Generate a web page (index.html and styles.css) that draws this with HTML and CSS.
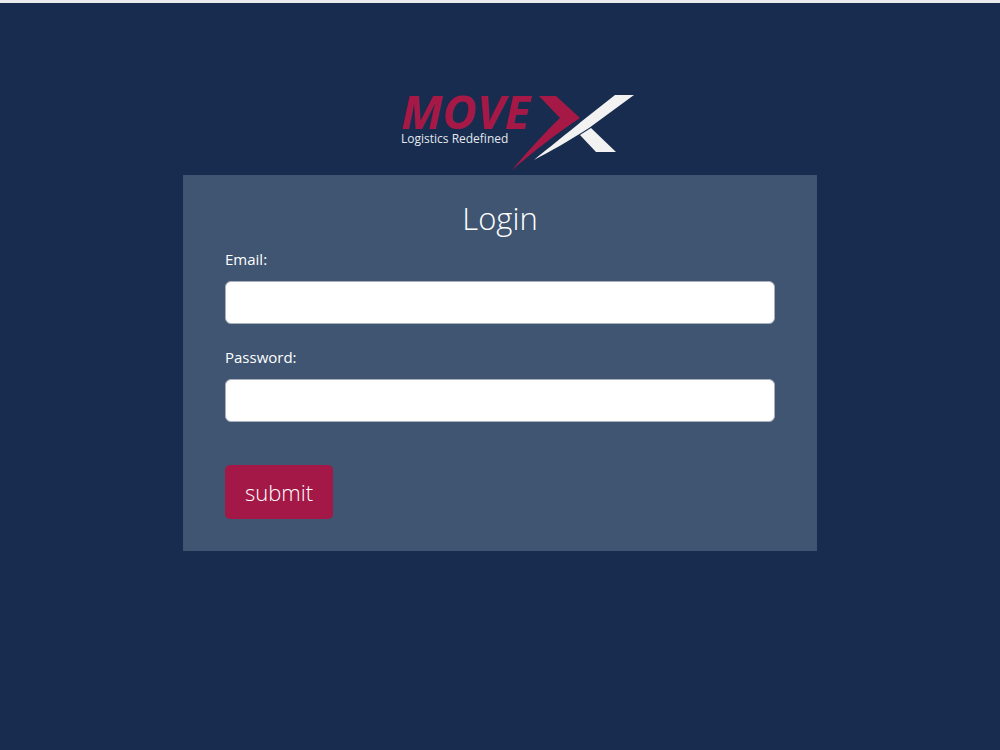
FILE: index.html
```html
<!DOCTYPE html>
<html lang="en">
<head>
    <meta charset="utf-8">
    <meta name="viewport" content="width=device-width, initial-scale=1">
    <title>MoveX Login</title>
    <link rel="stylesheet" href="styles.css">
</head>
<body>
    <main class="login">
        <svg class="logo" viewBox="0 -20 270 100" role="img" aria-label="MoveX Logistics Redefined">
            <text class="logo-name" x="36" y="34">MOVE</text>
            <text class="logo-tagline" x="36" y="48">Logistics Redefined</text>
            <path class="logo-arrow" d="M174 1H191L215 23C192 38 168 57 147 75C158 62 176 41 195 23Z"/>
            <path class="logo-stroke" d="M250 0H269L224 33C204 46 184 57 169 65C181 55 205 36 217 26Z"/>
            <path class="logo-stroke" d="M215 40L226 33L251 57H231Z"/>
        </svg>

        <form class="card" action="#" method="post">
            <h1>Login</h1>

            <div class="field">
                <label for="email">Email:</label>
                <input type="email" id="email" name="email">
            </div>

            <div class="field">
                <label for="password">Password:</label>
                <input type="password" id="password" name="password">
            </div>

            <button type="submit">submit</button>
        </form>
    </main>
</body>
</html>
```

FILE: styles.css
```css
* {
    box-sizing: border-box;
}

body {
    margin: 0;
    min-height: 100vh;
    border-top: 3px solid #e8eaec;
    background-color: #172c4e;
    color: white;
    font-family: "Open Sans", "Noto Sans", sans-serif;
}

.login {
    display: flex;
    flex-direction: column;
    align-items: center;
    padding: 72px 16px 32px;
}

.logo {
    display: block;
    width: 270px;
    height: 100px;
}

.logo-name {
    fill: #a61947;
    font-size: 47px;
    font-style: italic;
    font-weight: 700;
}

.logo-tagline {
    fill: #e4e8ee;
    font-size: 12px;
}

.logo-arrow {
    fill: #a61947;
}

.logo-stroke {
    fill: #f2f2f2;
}

.card {
    width: 100%;
    max-width: 634px;
    padding: 24px 42px 32px;
    background-color: #405571;
}

h1 {
    margin: 0 0 12px;
    font-size: 31px;
    font-weight: 300;
    line-height: 38px;
    text-align: center;
}

.field {
    margin-bottom: 23px;
}

label {
    display: block;
    margin-bottom: 12px;
    font-size: 15px;
    font-weight: 500;
    line-height: 20px;
}

input {
    display: block;
    width: 100%;
    height: 43px;
    padding: 8px 12px;
    border: 1px solid #a9b0bd;
    border-radius: 6px;
    background-color: white;
    font: inherit;
}

button {
    display: block;
    height: 54px;
    margin-top: 43px;
    padding: 0 20px;
    border: none;
    border-radius: 5px;
    background-color: #a31846;
    color: white;
    font-family: inherit;
    font-size: 22px;
    font-weight: 300;
    cursor: pointer;
}

button:hover {
    background-color: #8a133a;
}
```
